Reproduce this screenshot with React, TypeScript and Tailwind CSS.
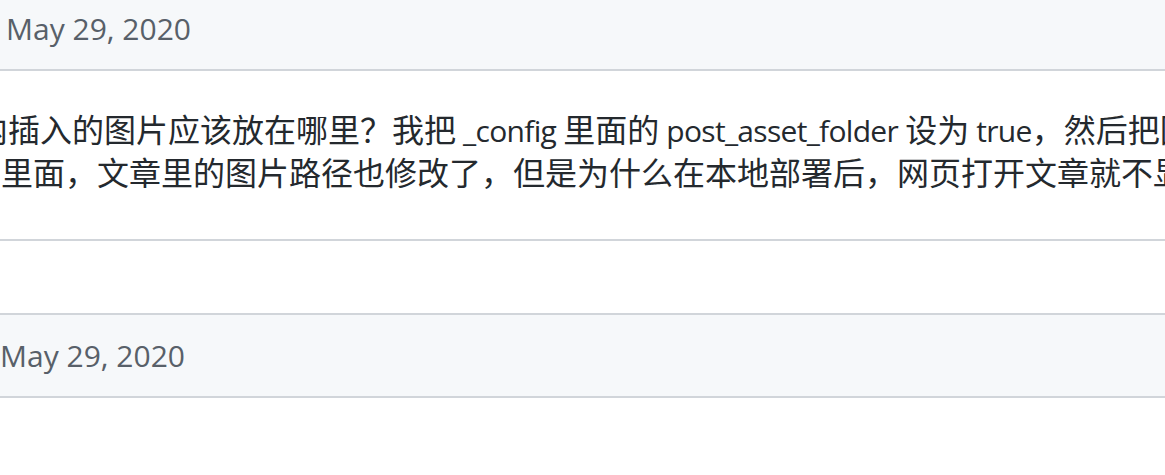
function L({ children }: { children: React.ReactNode }) {
  return <span className="text-[30px] tracking-[-0.7px]">{children}</span>;
}

export default function App() {
  const font = { fontFamily: '"Open Sans", "Noto Sans CJK SC", sans-serif' };
  return (
    <div className="w-[1165px] h-[475px] overflow-hidden bg-white" style={font}>
      <div className="-mt-[14px]">
        {/* Comment 1 */}
        <div className="border-y-2 border-[#d1d5da]">
          <div className="h-[83px] bg-[#f6f8fa] border-b-2 border-[#d1d5da] flex items-center pl-[6px] text-[30px] text-[#586069] whitespace-nowrap">
            May 29, 2020
          </div>
          <div className="pt-[38px] pb-[45px] text-[32px] leading-[42px] text-[#24292e] whitespace-nowrap overflow-hidden">
            <div className="-ml-[24px]">
              内插入的图片应该放在哪里？我把<L> _config </L>里面的<L> post_asset_folder </L>设为<L> true</L>，然后把图片放在同名文件夹里
            </div>
            <div className="-ml-[31px]">夹里面，文章里的图片路径也修改了，但是为什么在本地部署后，网页打开文章就不显示图片呢？</div>
          </div>
        </div>
        <div className="h-[72px]" />
        {/* Comment 2 */}
        <div className="border-y-2 border-[#d1d5da]">
          <div className="h-[83px] bg-[#f6f8fa] border-b-2 border-[#d1d5da] flex items-center pl-0 text-[30px] text-[#586069] whitespace-nowrap">
            May 29, 2020
          </div>
          <div className="h-[120px]" />
        </div>
      </div>
    </div>
  );
}
